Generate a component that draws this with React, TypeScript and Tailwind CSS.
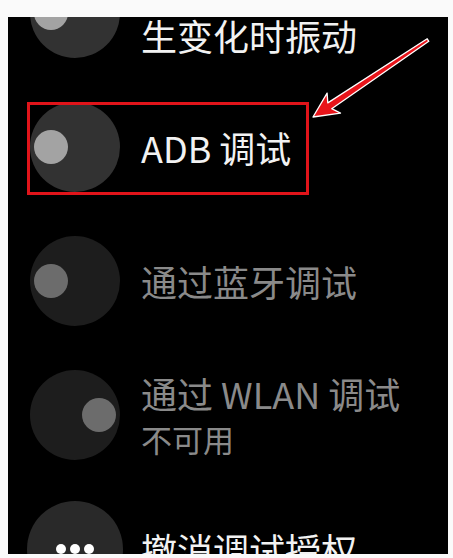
import React from 'react';

const font = { fontFamily: '"Noto Sans CJK SC", "Noto Sans", sans-serif' };

type ToggleProps = { on?: boolean; dim?: boolean };

const Toggle = ({ on, dim }: ToggleProps) => (
  <div
    className={`w-[90px] h-[90px] shrink-0 rounded-full flex items-center px-[4px] ${
      dim ? 'bg-[#1d1d1d]' : 'bg-[#323232]'
    } ${on ? 'justify-end' : 'justify-start'}`}
  >
    <div className={`w-[34px] h-[34px] rounded-full ${dim ? 'bg-[#6c6c6c]' : 'bg-[#a3a3a3]'}`} />
  </div>
);

const Arrow = () => (
  <svg className="absolute left-0 top-0 pointer-events-none" width="440" height="537" viewBox="8 17 440 537">
    <polygon
      points="313,117 327.1,93.1 327.8,102.9 427.2,38.8 428.8,41.3 331.7,108.7 340.5,113.1"
      fill="#e8141a"
      stroke="#ffffff"
      strokeWidth="1.3"
      strokeLinejoin="round"
    />
  </svg>
);

export default function App() {
  return (
    <div className="w-[453px] h-[558px] bg-[#fafafa] pt-[17px] pl-[8px]" style={font}>
      <div className="relative w-[440px] h-[537px] bg-black overflow-hidden">
        <div className="flex flex-col mt-[-71px] pl-[22px]">
          {/* vibration row, scrolled partly off the top; only its second line shows */}
          <div className="h-[134px] flex items-center gap-[21px]">
            <Toggle />
            <div className="mt-[44px] text-[36px] leading-[44px] text-[#f2f2f2]">生变化时振动</div>
          </div>

          <div className="h-[134px] flex items-center gap-[21px]">
            <Toggle />
            <div className="text-[36px] leading-[44px] text-[#f2f2f2]">ADB 调试</div>
          </div>

          <div className="h-[134px] flex items-center gap-[21px]">
            <Toggle dim />
            <div className="text-[36px] leading-[44px] text-[#8a8a8a]">通过蓝牙调试</div>
          </div>

          <div className="h-[134px] flex items-center gap-[21px]">
            <Toggle on dim />
            <div className="text-[#8a8a8a]">
              <div className="text-[36px] leading-[44px] whitespace-nowrap">通过 WLAN 调试</div>
              <div className="text-[31px] leading-[40px] mt-[4px]">不可用</div>
            </div>
          </div>

          <div className="h-[134px] flex items-center gap-[21px]">
            <div className="w-[96px] h-[96px] -mx-[3px] shrink-0 rounded-full bg-[#292929] flex items-center justify-center gap-[4px]">
              <div className="w-[10px] h-[10px] rounded-full bg-white" />
              <div className="w-[10px] h-[10px] rounded-full bg-white" />
              <div className="w-[10px] h-[10px] rounded-full bg-white" />
            </div>
            <div className="text-[36px] leading-[44px] text-[#f2f2f2]">撤消调试授权</div>
          </div>
        </div>

        {/* annotation */}
        <div className="absolute left-[19px] top-[85px] w-[282px] h-[93px] border-[3px] border-[#e0141a]" />
        <Arrow />
      </div>
    </div>
  );
}
